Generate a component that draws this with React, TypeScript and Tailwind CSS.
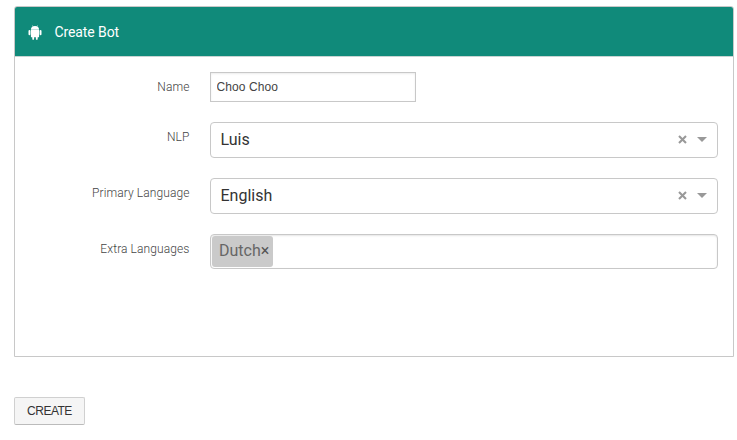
import type { ReactNode } from "react";

function AndroidIcon() {
  return (
    <svg className="mt-[2px] h-[15px] w-[14px] shrink-0" viewBox="0 0 14 15" fill="currentColor">
      <path d="M2.900 4.700C2.900 3.300 3.600 2.100 4.800 1.500L4.200.4l.3-.2.7 1.100a4.800 4.800 0 0 1 3.600 0l.7-1.100.3.2-.6 1.100c1.200.6 1.900 1.800 1.900 3.200z" />
      <path d="M2.900 5h8.200v6.400c0 .5-.4.900-.9.900H9.700v1.600a.9.9 0 0 1-1.800 0v-1.600H6.100v1.600a.9.9 0 0 1-1.800 0v-1.600h-.5a.9.9 0 0 1-.9-.9z" />
      <rect x="0.500" y="5" width="1.900" height="5.200" rx="0.950" />
      <rect x="11.600" y="5" width="1.900" height="5.200" rx="0.950" />
    </svg>
  );
}

function Row({ label, children }: { label: string; children: ReactNode }) {
  return (
    <div className="flex items-start">
      <label className="w-[174.500px] shrink-0 pt-[7px] text-right text-[12px] leading-4 font-light tracking-[0.1px] text-[#444]">
        {label}
      </label>
      <div className="ml-[20.500px] min-w-0 flex-1">{children}</div>
    </div>
  );
}

function Select({ value }: { value: string }) {
  return (
    <div className="flex h-9 items-center rounded-[4px] border border-[#c8c8c8] pr-[10px] pl-[9.500px] text-[16px] text-[#333]">
      <span className="flex-1 leading-[34px]">{value}</span>
      <svg className="mr-[10px] mb-[2px] h-[9px] w-[9px]" viewBox="0 0 9 9" stroke="#999" strokeWidth="2.100">
        <path d="M1 1l7 7M8 1l-7 7" />
      </svg>
      <svg className="mb-[2px] h-[5px] w-[10px]" viewBox="0 0 10 5" fill="#999">
        <path d="M0 0h10L5 5z" />
      </svg>
    </div>
  );
}

export default function App() {
  return (
    <main className="h-[440px] w-[737px] bg-white pt-[6px] pl-[14px] font-[Roboto,sans-serif]">
      <section className="h-[351px] w-[720px] rounded-t-[3px] border border-[#c8c8c8]">
        <header className="flex h-[50px] items-center rounded-t-[2px] border-b border-[#c8d4d2] bg-[#108a7a] pl-[13px] text-white">
          <AndroidIcon />
          <h1 className="ml-[12.500px] text-[14px] leading-5 tracking-[-0.1px]">Create Bot</h1>
        </header>
        <form className="flex flex-col gap-5 pt-[15px] pr-[15px]">
          <Row label="Name">
            <input
              className="block h-[30px] w-[206px] border border-[#c8c8c8] px-[5.500px] font-['Liberation_Sans',sans-serif] text-[12px] tracking-[0.1px] text-[#444] shadow-[inset_0_1px_2px_rgba(0,0,0,0.08)]"
              defaultValue="Choo Choo"
            />
          </Row>
          <Row label="NLP">
            <Select value="Luis" />
          </Row>
          <Row label="Primary Language">
            <Select value="English" />
          </Row>
          <Row label="Extra Languages">
            <div className="h-[35px] rounded-[4px] border border-[#c8c8c8] p-px shadow-[inset_0_1px_2px_rgba(0,0,0,0.1)]">
              <span className="flex h-[31px] w-[61px] items-center rounded-[3px] bg-[#cacaca] pb-[2px] pl-[7px] text-[16px] text-[#666]">
                Dutch<span className="text-[#555]">×</span>
              </span>
            </div>
          </Row>
        </form>
      </section>
      <button className="mt-10 flex h-7 w-[71px] items-center justify-center rounded-[2px] border border-[#d0d0d0] border-b-[#bbb] bg-[#f5f5f5] font-['Liberation_Sans',sans-serif] text-[12px] tracking-[-0.5px] text-[#333]">
        CREATE
      </button>
    </main>
  );
}
